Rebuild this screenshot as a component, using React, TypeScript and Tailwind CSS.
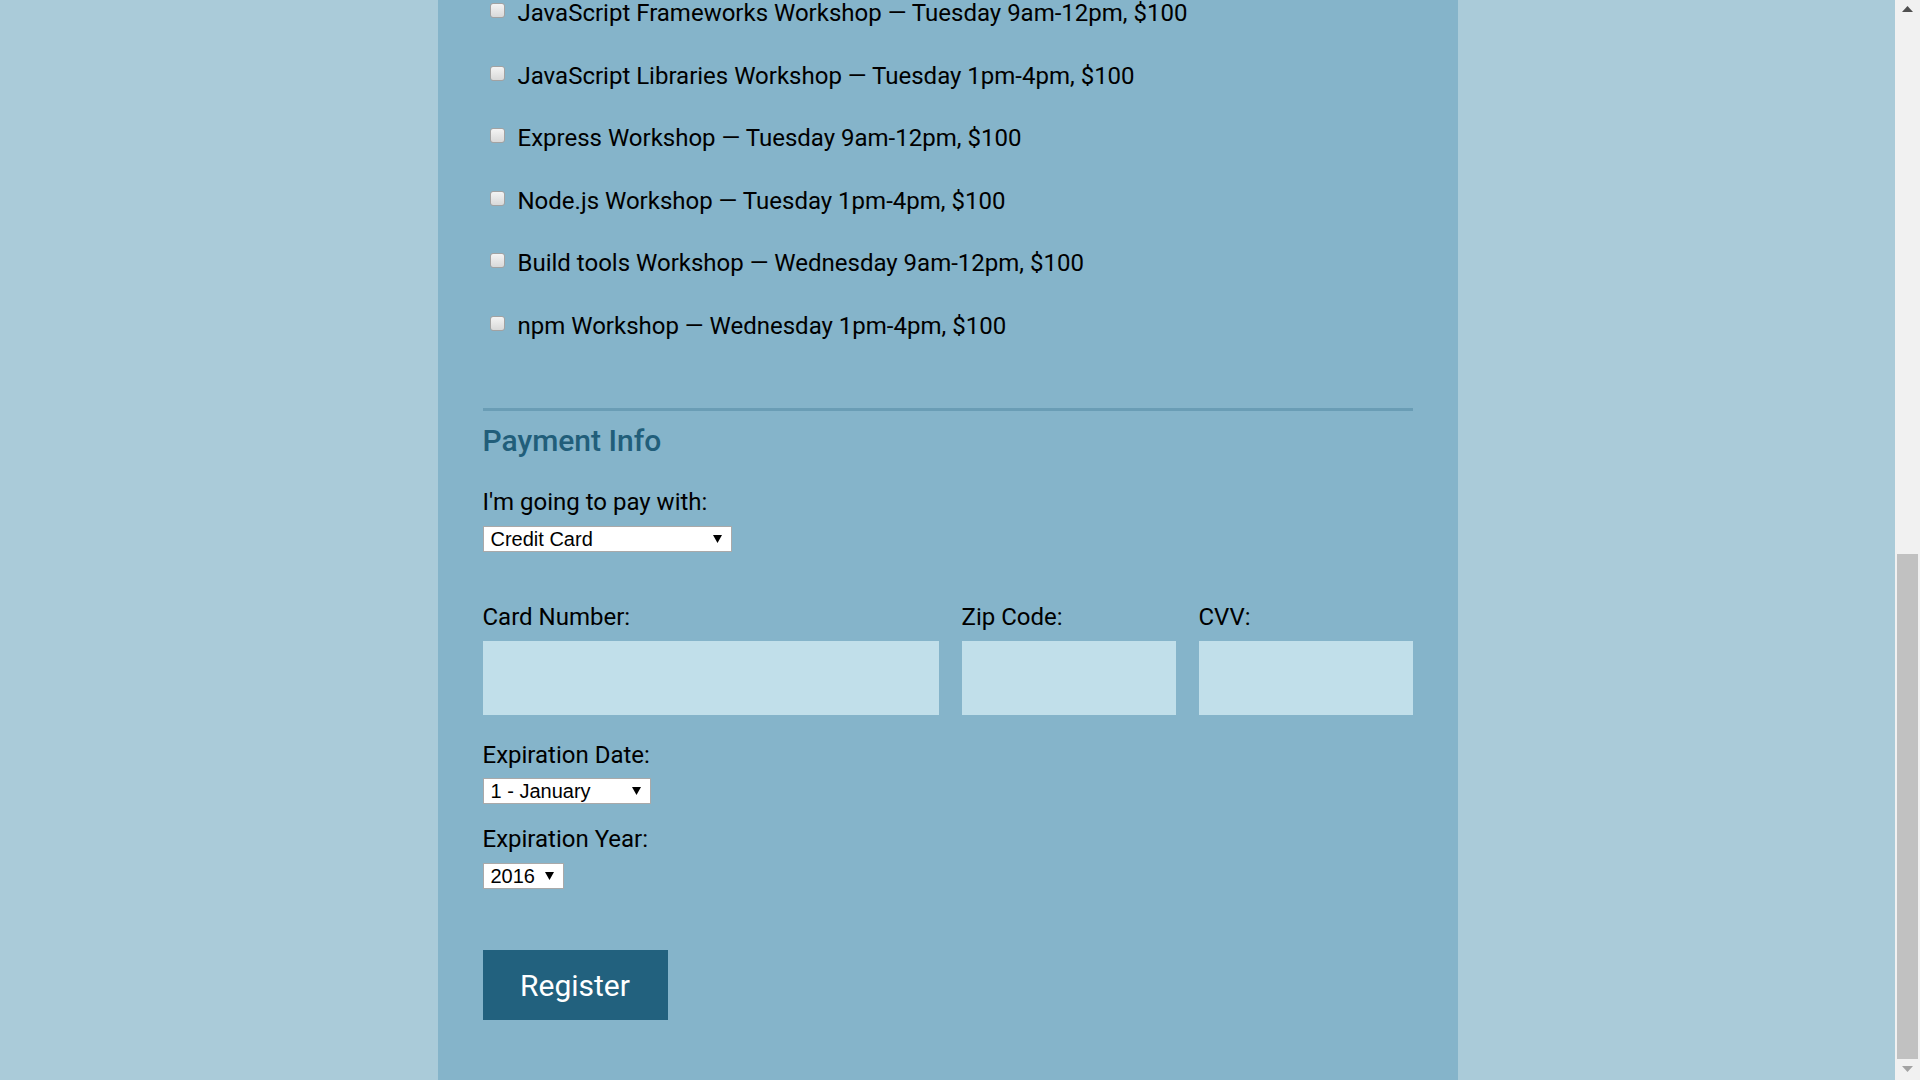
import React from 'react'

const workshops = [
  'JavaScript Frameworks Workshop — Tuesday 9am-12pm, $100',
  'JavaScript Libraries Workshop — Tuesday 1pm-4pm, $100',
  'Express Workshop — Tuesday 9am-12pm, $100',
  'Node.js Workshop — Tuesday 1pm-4pm, $100',
  'Build tools Workshop — Wednesday 9am-12pm, $100',
  'npm Workshop — Wednesday 1pm-4pm, $100',
]

function Arrow() {
  return (
    <svg width="9" height="8" viewBox="0 0 9 8" className="shrink-0">
      <path d="M0 0 H9 L4.5 8 Z" fill="#000" />
    </svg>
  )
}

function FakeSelect({ value, width }: { value: string; width: string }) {
  return (
    <div className={`${width} flex h-[26px] items-center justify-between border border-[#a9a9a9] bg-white pl-[7px] pr-[9px] text-[20px] leading-none text-black`} style={{ fontFamily: '"Liberation Sans", Arial, sans-serif' }}>
      <span>{value}</span>
      <Arrow />
    </div>
  )
}

function Label({ children, className = '' }: { children: React.ReactNode; className?: string }) {
  return <label className={`block text-[24px] leading-[28px] text-black ${className}`}>{children}</label>
}

function Scrollbar() {
  return (
    <div className="flex w-[25px] shrink-0 flex-col items-center bg-[#f1f1f1]">
      <svg width="11" height="6" viewBox="0 0 11 6" className="mt-[6px]">
        <path d="M0 6 L5.5 0 L11 6 Z" fill="#505050" />
      </svg>
      <div className="flex-1" />
      <div className="h-[505px] w-[21px] bg-[#c1c1c1]" />
      <svg width="11" height="6" viewBox="0 0 11 6" className="mb-[8px] mt-[7px]">
        <path d="M0 0 L11 0 L5.5 6 Z" fill="#a3a3a3" />
      </svg>
    </div>
  )
}

export default function App() {
  return (
    <div className="flex h-[1080px] w-[1920px] overflow-hidden bg-[#aacbd9]" style={{ fontFamily: 'Roboto, "Noto Sans", sans-serif' }}>
      <div className="flex flex-1 justify-center">
        <div className="w-[1020px] bg-[#85b4ca] px-[45px]">
          {/* activities */}
          <div className="-mt-px">
            {workshops.map(w => (
              <div key={w} className="flex h-[62.5px] items-start">
                <span className="ml-[7px] mt-[4px] h-[15px] w-[15px] shrink-0 rounded-[3px] border border-[#a2a2a2] bg-gradient-to-b from-[#f4f4f4] to-[#d9d9d9]" />
                <span className="ml-[13px] text-[24px] leading-[28px] text-black">{w}</span>
              </div>
            ))}
          </div>

          <div className="mt-[34px] h-[3px] bg-[#6a9db5]" />

          <h2 className="mt-[12px] text-[30px] font-medium leading-[36px] text-[#215e7a]">Payment Info</h2>

          <Label className="mt-[29px]">I'm going to pay with:</Label>
          <div className="mt-[10px]">
            <FakeSelect value="Credit Card" width="w-[249px]" />
          </div>

          <div className="mt-[51px] flex gap-[23px]">
            <div className="w-[456px]">
              <Label>Card Number:</Label>
              <div className="mt-[10px] h-[74px] bg-[#c1dfea]" />
            </div>
            <div className="w-[214px]">
              <Label>Zip Code:</Label>
              <div className="mt-[10px] h-[74px] bg-[#c1dfea]" />
            </div>
            <div className="w-[214px]">
              <Label>CVV:</Label>
              <div className="mt-[10px] h-[74px] bg-[#c1dfea]" />
            </div>
          </div>

          <Label className="mt-[26px]">Expiration Date:</Label>
          <div className="mt-[9px]">
            <FakeSelect value="1 - January" width="w-[168px]" />
          </div>

          <Label className="mt-[21px]">Expiration Year:</Label>
          <div className="mt-[10px]">
            <FakeSelect value="2016" width="w-[81px]" />
          </div>

          <button className="mt-[61px] flex h-[70px] w-[185px] items-center justify-center bg-[#22617e] text-[30px] text-white">
            Register
          </button>
        </div>
      </div>
      <Scrollbar />
    </div>
  )
}
